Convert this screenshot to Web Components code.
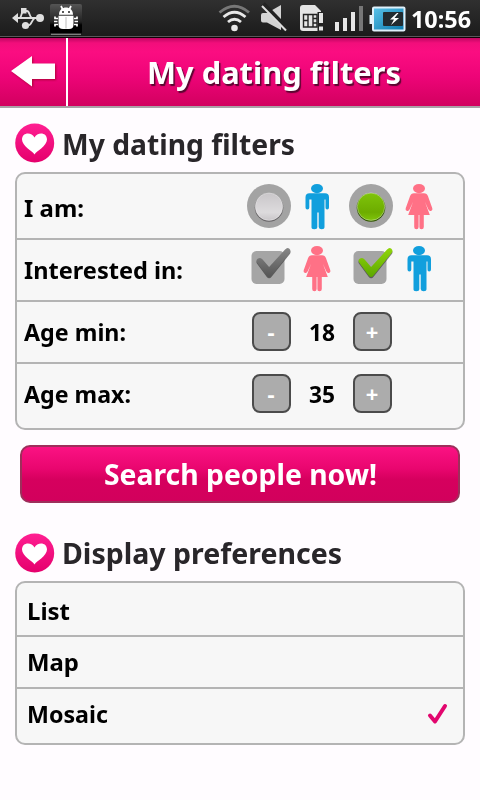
<!DOCTYPE html>
<html lang="en"><head><meta charset="utf-8"><title>My dating filters</title>
<style>
html,body{margin:0;height:100%}
body{background:#fffcff;font-family:"Noto Sans","Open Sans",sans-serif;font-weight:700;color:#000;overflow:hidden}
</style></head><body>
<dating-app></dating-app>
<script>
const define=(name,html,init)=>{
  const t=document.createElement('template');t.innerHTML=html;
  customElements.define(name,class extends HTMLElement{
    connectedCallback(){
      if(this.shadowRoot)return;
      this.attachShadow({mode:'open'}).append(t.content.cloneNode(true));
      if(init)init(this,this.shadowRoot);
    }
  });
};

/* Text condensed to a given advance width */
define('fit-text',`<style>:host{display:block;white-space:nowrap;flex:none}span{display:inline-block;transform-origin:0 50%}</style><span><slot></slot></span>`,
(el,r)=>{
  const w=+el.getAttribute('w'),s=r.querySelector('span');
  el.style.width=w+'px';
  s.style.transform='scaleX('+(w/s.getBoundingClientRect().width)+')';
});

define('status-bar',`<style>
:host{display:flex;height:36px;background:linear-gradient(#303030,#1b1b1b);border-bottom:1px solid #5a565a;box-shadow:0 1px #120008;position:relative;z-index:1;color:#fff;font-size:23px;line-height:38px}
svg{flex:none;display:block}fit-text{margin-left:5px}
</style>
<svg width="406" height="36" viewBox="0 0 406 36">
<defs><linearGradient id="tile" x2="0" y2="1"><stop stop-color="#555"/><stop offset=".6" stop-color="#222"/><stop offset=".7" stop-color="#000"/></linearGradient>
<linearGradient id="bat" y2="1" x2="1"><stop stop-color="#5cc4ea"/><stop offset="1" stop-color="#0878ad"/></linearGradient></defs>
<g fill="#dedede" stroke="none"><path d="M12 18l6-5v10z"/><circle cx="40" cy="18" r="4"/><rect x="21" y="8" width="5.500" height="5.500"/><circle cx="25.500" cy="25.500" r="3.600"/></g>
<path d="M17 18H38M20 17.500c2-1 1-6.500 4-6.500h3c3 0 2 6 5 7M26 25.500h2c4 0 4-7 7-7.500" fill="none" stroke="#dedede" stroke-width="1.800"/>
<rect x="50" y="4" width="32" height="30" rx="2" fill="url(#tile)"/><path d="M51 34.200H81" stroke="#aaa"/>
<g fill="#fff"><path d="M59 14.700c0-9.500 14-9.500 14 0z"/><path d="M58.500 15.700H73.500V25q0 4-4.500 4H63q-4.500 0-4.500-4z"/></g>
<path d="M61 6l2 4M71 6l-2 4M58 18.500h-3v-2M57.500 21.500h-3.500M58 24.500h-3v2M74 18.500h3v-2M74.500 21.500h3.500M74 24.500h3v2" stroke="#fff" stroke-width="1.700" fill="none"/>
<circle cx="63" cy="12" r="1" fill="#222"/><circle cx="69" cy="12" r="1" fill="#222"/><path d="M66 17V28.500" stroke="#bbb"/>
<g fill="none" stroke-width="2.800"><path d="M219.500 12.500Q234.500 0 249 12.500" stroke="#777"/><path d="M223.500 17Q234.500 7.500 245.500 17" stroke="#e8e8e8"/><path d="M228 22Q234.500 16.500 241 22" stroke="#e8e8e8"/></g><circle cx="234.500" cy="28" r="3.300" fill="#e8e8e8"/>
<path d="M263 13h4l14-8v25l-14-7.500h-4q-2 0-2-2v-5.500q0-2 2-2z" fill="#d4d4d4"/><path d="M263 4L288 30" stroke="#222" stroke-width="5"/><path d="M262 6L286 30.500" stroke="#ddd" stroke-width="2"/>
<path d="M300 8q0-3 3-3h12l6 6v17q0 3-3 3h-15q-3 0-3-3z" fill="#e4e4e4"/><path d="M303.500 14.500h13.500v12.500h-13.500zM308 14.500v12.500M313 14.500v12.500M303.500 20.500h4.500M313 18.500h4M313 23h4" fill="none" stroke="#222" stroke-width="1.400"/><path d="M317.500 12h6v19.500h-6z" fill="#222"/><path d="M319 13h4v10h-4zM319 26.500h4v4h-4z" fill="#e4e4e4"/>
<path d="M335 22h4v9h-4zM343 18h4v13h-4zM351 12h4v19h-4z" fill="#e6e6e6"/><path d="M359 6h4v25h-4z" fill="#777"/>
<rect x="369.500" y="15" width="4" height="9" fill="#e8f4fa"/><rect x="373" y="7.500" width="31.500" height="23" rx="1" fill="url(#bat)" stroke="#dff0fa" stroke-width="2"/><rect x="383" y="12" width="20" height="14" rx="1" fill="#222b30"/><path d="M397 13l-7 6.500h4l-3 5.500 8-7h-4.500l4-5z" fill="#fff"/>
</svg><fit-text w="60">10:56</fit-text>`);

define('back-button',`<style>:host{display:block;width:66px;height:68px;border-right:2px solid #fff;flex:none}svg{display:block;filter:drop-shadow(1px 1px 1px #7008)}</style>
<svg width="66" height="68"><path d="M11 33L32 18v7.500H55V41H32v7.500z" fill="#fff"/></svg>`);

define('title-bar',`<style>:host{display:flex;height:68px;margin-top:1px;background:linear-gradient(#c00562 0,#f20e7b 5px,#fb0d81 14px,#ee0478 38px,#d2005f 68px);border-bottom:2px solid #aaa0a6;color:#fff;font-size:31px;line-height:68px}
.t{flex:1;display:flex;justify-content:center;text-shadow:1.500px 2px 1px #5a0630}</style>
<back-button></back-button><div class="t"><slot></slot></div>`);

define('heart-badge',`<style>:host{display:block;width:40px;height:40px;flex:none}svg{display:block}</style>
<svg width="40" height="40"><defs><linearGradient id="g" x2="0" y2="1"><stop stop-color="#ff1f92"/><stop offset="1" stop-color="#e5006c"/></linearGradient></defs><circle cx="19.700" cy="20" r="19.500" fill="url(#g)"/><path d="M19.500 31.500C17.500 28 7 23 7 16.500c0-7.500 9.500-8 12.500-2 3-6 12.500-5.500 12.500 2 0 6.500-10.500 11.500-12.500 15z" fill="#fff"/></svg>`);

define('section-heading',`<style>:host{display:flex;height:40px;padding-left:15px;gap:7px;color:#29262a;font-size:29px;line-height:40px}</style><heart-badge></heart-badge><slot></slot>`);

define('rounded-panel',`<style>:host{display:flex;flex-direction:column;box-sizing:border-box;width:450px;margin-left:15px;border:2px solid #b4b4b4;border-radius:10px;background:#f7f7f7}</style><slot></slot>`);

define('filter-row',`<style>
:host{display:grid;grid-template-columns:223px 44px 58px 44px 50px;height:60px;padding-left:7px;font-size:24px;line-height:60px;align-items:start}
:host(:not(:last-child)){border-bottom:2px solid #b4b4b4}:host(:first-child){padding-top:4px}:host(:last-child){padding-bottom:4px}
</style><slot></slot>`);

define('person-icon',`<style>:host{display:block;padding:6px 0 0 4px}svg{display:block}.f{display:none}:host([kind=female]) .f{display:block}:host([kind=female]) .m{display:none}</style>
<svg width="44" height="46"><g class="m" fill="#119fdd"><ellipse cx="22" cy="4.600" rx="6" ry="4.600"/><path d="M13.500 9.300h16.500q4 0 4 4V23.500q0 2-1.800 2t-1.700-2V15.500h-1V43q0 2.200-2.800 2.200t-3-2.200V28.500h-1.400V43q0 2.200-3 2.200t-2.800-2.200V15.500h-2.200v8q0 2-1.900 2t-1.900-2V13.300q0-4 4-4z"/></g>
<g class="f" fill="#ff7186"><ellipse cx="22" cy="4.600" rx="6" ry="4.600"/><path d="M17 9.300h10q3 0 4 3l4.300 12q.7 2-1.300 2.700-1.800.5-2.700-1.700L28 18l4.800 13h-6V43q0 2.300-2.300 2.300T22.400 43V31h-.8V43q0 2.300-2.200 2.300T17.200 43V31h-6L16 18l-3.300 7.300Q11.800 27.500 10 27q-2-.7-1.300-2.700l4.300-12q1-3 4-3z"/></g></svg>`);

define('radio-dot',`<style>:host{display:block;padding-top:6px;--a:#c9c6c9;--b:#dddbdd;--e:#686568}:host([on]){--a:#7fc40a;--b:#6dac00;--e:#315500}svg{display:block}.a{stop-color:var(--a)}.b{stop-color:var(--b)}</style>
<svg width="44" height="44"><defs><linearGradient id="g" x2="0" y2="1"><stop class="a"/><stop class="b" offset=".7"/><stop class="a" offset="1"/></linearGradient></defs><circle cx="22" cy="22" r="22" fill="#a3a3a3"/><circle cx="22" cy="23.500" r="14.300" style="fill:var(--e)"/><circle cx="22" cy="22.700" r="13.700" fill="url(#g)" stroke="#fff8" stroke-width=".7"/></svg>`);

define('check-mark',`<style>:host{display:block;padding-top:6px;--a:#888;--b:#555}:host([on]){--a:#91d60b;--b:#5ca700}svg{display:block}.a{stop-color:var(--a)}.b{stop-color:var(--b)}</style>
<svg width="46" height="44"><defs><linearGradient id="g" x2="0" y2="1"><stop class="a"/><stop class="b" offset="1"/></linearGradient></defs><rect x="4.500" y="5" width="33" height="33" rx="5" fill="#a5a5a5"/><g transform="translate(-.4 0)"><path id="c" d="M11 12.800q3-2 5 .7l6.500 7.500L38.500 3.500q2-2.500 4-1 2.500 2 .5 4.500L25 29.500q-2.500 3-5 0L10.500 16.500q-1.500-2 .5-3.700z" fill="#333" opacity=".65" transform="translate(0 1.300)"/><path d="M11 12.800q3-2 5 .7l6.500 7.500L38.500 3.500q2-2.500 4-1 2.500 2 .5 4.500L25 29.500q-2.500 3-5 0L10.500 16.500q-1.500-2 .5-3.700z" fill="url(#g)"/></g></svg>`);

define('step-button',`<style>:host{display:flex;justify-content:center;box-sizing:border-box;width:39px;height:39px;margin:10px 0 0 5px;border:2px solid #4b4b4b;border-radius:8px;background:#acacac;color:#fff;font-size:22px;line-height:34px;text-indent:-1px}:host([plus]){margin-left:4px}</style><slot></slot>`);

define('number-value',`<style>:host{display:flex;padding-left:18px}</style><fit-text w="26"><slot></slot></fit-text>`);

define('search-button',`<style>:host{display:flex;justify-content:center;box-sizing:border-box;width:440px;height:58px;margin:15px 0 0 20px;border:2px solid #9d2f5b;border-radius:10px;background:linear-gradient(#fb1283,#e9066f 40%,#d6005e 60%,#d2005c);color:#fff;font-size:29px;line-height:54px}</style><slot></slot>`);

define('choice-row',`<style>:host{display:flex;justify-content:space-between;height:50px;padding:0 15px 0 10px;font-size:24px;line-height:50px}
:host(:not(:last-child)){border-bottom:2px solid #b4b4b4}:host(:first-child){padding-top:2px;line-height:52px}:host(:last-child){padding-bottom:4px}
svg{display:none;margin-top:14px}:host([chosen]) svg{display:block}</style><slot></slot><svg width="21" height="22"><path d="M3 12.500L8 18.500 18 3" fill="none" stroke="#e2066e" stroke-width="4" stroke-linecap="round" stroke-linejoin="round"/></svg>`);

define('dating-app',`<style>:host{display:flex;flex-direction:column;width:480px;height:800px}.a{margin:15px 0 9px;line-height:42px}.b{margin:30px 0 8px}</style>
<status-bar></status-bar>
<title-bar><fit-text w="254">My dating filters</fit-text></title-bar>
<section-heading class="a"><fit-text w="233">My dating filters</fit-text></section-heading>
<rounded-panel>
<filter-row><fit-text w="60">I am:</fit-text><radio-dot></radio-dot><person-icon kind="male"></person-icon><radio-dot on></radio-dot><person-icon kind="female"></person-icon></filter-row>
<filter-row><fit-text w="159">Interested in:</fit-text><check-mark></check-mark><person-icon kind="female"></person-icon><check-mark on></check-mark><person-icon kind="male"></person-icon></filter-row>
<filter-row><fit-text w="102">Age min:</fit-text><step-button>-</step-button><number-value>18</number-value><step-button plus>+</step-button></filter-row>
<filter-row><fit-text w="107">Age max:</fit-text><step-button>-</step-button><number-value>35</number-value><step-button plus>+</step-button></filter-row>
</rounded-panel>
<search-button><fit-text w="273">Search people now!</fit-text></search-button>
<section-heading class="b"><fit-text w="280">Display preferences</fit-text></section-heading>
<rounded-panel>
<choice-row><fit-text w="43">List</fit-text></choice-row>
<choice-row><fit-text w="52">Map</fit-text></choice-row>
<choice-row chosen><fit-text w="81">Mosaic</fit-text></choice-row>
</rounded-panel>`);
</script></body></html>
